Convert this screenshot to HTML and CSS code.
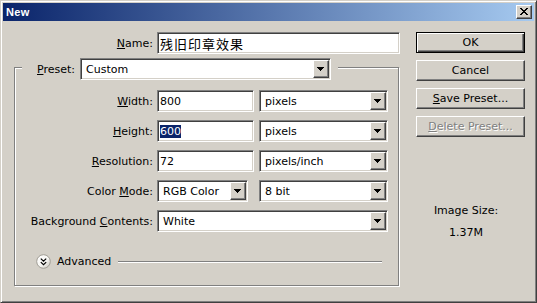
FILE: index.html
```html
<!DOCTYPE html>
<html>
<head>
<meta charset="utf-8">
<title>New</title>
<link rel="stylesheet" href="styles.css">
</head>
<body>
<div class="window">
  <div class="titlebar">
    <span class="title">New</span>
    <span class="close raised">
      <svg width="8" height="7" viewBox="0 0 8 7" shape-rendering="crispEdges"><path d="M0 0h2v1h-2zM6 0h2v1h-2zM1 1h2v1h-2zM5 1h2v1h-2zM2 2h4v1h-4zM3 3h2v1h-2zM2 4h4v1h-4zM1 5h2v1h-2zM5 5h2v1h-2zM0 6h2v1h-2zM6 6h2v1h-2z" fill="#000"/></svg>
    </span>
  </div>
  <div class="body">
    <div class="main">
      <div class="name-row">
        <span class="lbl name-lbl"><u>N</u>ame:</span>
        <div class="edit sunken name-edit"><span class="cjk">残旧印章效果</span></div>
      </div>
      <div class="group">
        <div class="group-head">
          <span class="lbl preset-lbl"><u>P</u>reset:</span>
          <div class="combo sunken preset-combo">
            <span class="combo-text">Custom</span>
            <span class="drop raised"><svg width="7" height="4" viewBox="0 0 7 4" shape-rendering="crispEdges"><path d="M0 0h7v1h-7zM1 1h5v1h-5zM2 2h3v1h-3zM3 3h1v1h-1z" fill="#000"/></svg></span>
          </div>
        </div>
        <div class="grid">
          <span class="lbl row-lbl"><u>W</u>idth:</span>
          <div class="edit sunken field"><span>800</span></div>
          <div class="combo sunken unit"><span class="combo-text">pixels</span><span class="drop raised"><svg width="7" height="4" viewBox="0 0 7 4" shape-rendering="crispEdges"><path d="M0 0h7v1h-7zM1 1h5v1h-5zM2 2h3v1h-3zM3 3h1v1h-1z" fill="#000"/></svg></span></div>

          <span class="lbl row-lbl"><u>H</u>eight:</span>
          <div class="edit sunken field"><span class="sel">600</span></div>
          <div class="combo sunken unit"><span class="combo-text">pixels</span><span class="drop raised"><svg width="7" height="4" viewBox="0 0 7 4" shape-rendering="crispEdges"><path d="M0 0h7v1h-7zM1 1h5v1h-5zM2 2h3v1h-3zM3 3h1v1h-1z" fill="#000"/></svg></span></div>

          <span class="lbl row-lbl"><u>R</u>esolution:</span>
          <div class="edit sunken field"><span>72</span></div>
          <div class="combo sunken unit"><span class="combo-text">pixels/inch</span><span class="drop raised"><svg width="7" height="4" viewBox="0 0 7 4" shape-rendering="crispEdges"><path d="M0 0h7v1h-7zM1 1h5v1h-5zM2 2h3v1h-3zM3 3h1v1h-1z" fill="#000"/></svg></span></div>

          <span class="lbl row-lbl">Color <u>M</u>ode:</span>
          <div class="combo sunken mode"><span class="combo-text">RGB Color</span><span class="drop raised"><svg width="7" height="4" viewBox="0 0 7 4" shape-rendering="crispEdges"><path d="M0 0h7v1h-7zM1 1h5v1h-5zM2 2h3v1h-3zM3 3h1v1h-1z" fill="#000"/></svg></span></div>
          <div class="combo sunken unit"><span class="combo-text">8 bit</span><span class="drop raised"><svg width="7" height="4" viewBox="0 0 7 4" shape-rendering="crispEdges"><path d="M0 0h7v1h-7zM1 1h5v1h-5zM2 2h3v1h-3zM3 3h1v1h-1z" fill="#000"/></svg></span></div>

          <span class="lbl row-lbl">Background <u>C</u>ontents:</span>
          <div class="combo sunken bg"><span class="combo-text">White</span><span class="drop raised"><svg width="7" height="4" viewBox="0 0 7 4" shape-rendering="crispEdges"><path d="M0 0h7v1h-7zM1 1h5v1h-5zM2 2h3v1h-3zM3 3h1v1h-1z" fill="#000"/></svg></span></div>
        </div>
        <div class="advanced">
          <svg class="adv-icon" width="15" height="15" viewBox="0 0 15 15">
            <defs>
              <linearGradient id="g" x1="0" y1="0" x2="1" y2="1">
                <stop offset="0" stop-color="#ffffff"/>
                <stop offset="0.55" stop-color="#f7f6f3"/>
                <stop offset="1" stop-color="#c4c1b8"/>
              </linearGradient>
            </defs>
            <circle cx="7.5" cy="7.5" r="6.8" fill="url(#g)" stroke="#a09d95" stroke-width="1"/>
            <path d="M4.8 4.6 L7.5 7.1 L10.2 4.6 M4.8 8.1 L7.5 10.6 L10.2 8.1" fill="none" stroke="#000" stroke-width="1.2"/>
          </svg>
          <span class="adv-text">Advanced</span>
          <span class="adv-line"></span>
        </div>
      </div>
    </div>
    <div class="side">
      <div class="btn default">OK</div>
      <div class="btn">Cancel</div>
      <div class="btn"><span><u>S</u>ave Preset...</span></div>
      <div class="btn disabled"><span><u>D</u>elete Preset...</span></div>
      <div class="size">
        <div>Image Size:</div>
        <div>1.37M</div>
      </div>
    </div>
  </div>
</div>
</body>
</html>
```
FILE: styles.css
```css
* { box-sizing: border-box; }
html, body { margin: 0; padding: 0; }
body {
  width: 537px;
  height: 303px;
  overflow: hidden;
  background: #d4d0c8;
  font-family: "DejaVu Sans", Tahoma, sans-serif;
  font-size: 11px;
  color: #000;
}
u { text-decoration: underline; text-underline-offset: 1px; }

.window {
  width: 537px;
  height: 303px;
  background: #d4d0c8;
  border: 1px solid;
  border-color: #d4d0c8 #404040 #404040 #d4d0c8;
  box-shadow: inset 1px 1px #fff, inset -1px -1px #808080;
  padding: 2px;
  display: flex;
  flex-direction: column;
}

.titlebar {
  height: 18px;
  background: linear-gradient(to right, #0a246a 0%, #a6caf0 100%);
  display: flex;
  align-items: center;
  justify-content: space-between;
  padding: 0 2px 0 3px;
}
.title {
  color: #fff;
  font-family: "Liberation Sans", Arial, sans-serif;
  font-weight: bold;
  font-size: 11px;
  letter-spacing: 0.3px;
}

.raised {
  background: #d4d0c8;
  border: 1px solid;
  border-color: #fff #404040 #404040 #fff;
  box-shadow: inset -1px -1px #808080;
}
.sunken {
  background: #fff;
  border: 1px solid;
  border-color: #808080 #fff #fff #808080;
  box-shadow: inset 1px 1px #404040, inset -1px -1px #d4d0c8;
}

.close {
  width: 16px;
  height: 14px;
  display: flex;
  align-items: center;
  justify-content: center;
}
.close svg { display: block; margin-left: -1px; margin-top: -1px; }

.body {
  flex: 1;
  display: flex;
  padding-top: 11px;
}
.main {
  width: 413px;
  display: flex;
  flex-direction: column;
}

.lbl { white-space: nowrap; }

.name-row {
  display: flex;
  align-items: center;
  height: 22px;
}
.name-lbl {
  width: 154px;
  text-align: right;
  padding-right: 4px;
}
.edit {
  height: 22px;
  display: flex;
  align-items: center;
  padding-left: 2px;
}
.name-edit { width: 243px; }
.cjk {
  font-family: "Noto Sans CJK SC", sans-serif;
  font-size: 13px;
  letter-spacing: 1px;
}

.group {
  margin: 13px 0 0 11px;
  width: 385px;
  border: 1px solid #808080;
  box-shadow: inset 1px 1px #fff, 1px 1px #fff;
  padding: 0 16px 16px 0;
  display: flex;
  flex-direction: column;
}
.group-head {
  margin: -10px 0 0 7px;
  padding: 0 7px 0 15px;
  background: #d4d0c8;
  display: flex;
  align-items: center;
  align-self: flex-start;
  height: 22px;
}
.preset-lbl { width: 43px; }

.combo {
  height: 22px;
  display: flex;
  align-items: stretch;
  padding: 1px;
}
.combo-text {
  flex: 1;
  display: flex;
  align-items: center;
  padding-left: 4px;
  overflow: hidden;
  white-space: nowrap;
}
.drop {
  width: 16px;
  display: flex;
  align-items: center;
  justify-content: center;
}
.drop svg { display: block; margin-left: -1px; }
.preset-combo { width: 251px; }

.grid {
  margin-top: 10px;
  display: grid;
  grid-template-columns: 142px 102px 129px;
  grid-auto-rows: 22px;
  row-gap: 8px;
  align-items: center;
}
.row-lbl {
  text-align: right;
  padding-right: 4px;
}
.field { width: 97px; }
.unit { width: 129px; }
.mode { width: 91px; }
.bg { grid-column: 2 / 4; width: 231px; }
.sel {
  background: #0a246a;
  color: #fff;
  line-height: 13px;
}

.advanced {
  margin-top: 22px;
  height: 15px;
  display: flex;
  align-items: center;
  padding-left: 21px;
}
.adv-icon { display: block; flex: none; }
.adv-text { margin-left: 6px; }
.adv-line {
  flex: 1;
  margin-left: 7px;
  height: 2px;
  border-top: 1px solid #808080;
  border-bottom: 1px solid #fff;
  margin-top: 1px;
}

.side {
  width: 109px;
  display: flex;
  flex-direction: column;
  gap: 7px;
}
.btn {
  height: 21px;
  display: flex;
  align-items: center;
  justify-content: center;
  background: #d4d0c8;
  border: 1px solid;
  border-color: #fff #404040 #404040 #fff;
  box-shadow: inset -1px -1px #808080;
}
.btn.default {
  border-color: #000;
  box-shadow: inset 1px 1px #fff, inset -1px -1px #404040, inset -2px -2px #808080;
}
.btn.disabled {
  color: #808080;
  text-shadow: 1px 1px #fff;
}
.size {
  margin-top: 60px;
  padding-right: 9px;
  text-align: center;
  line-height: 14px;
  display: flex;
  flex-direction: column;
  gap: 8px;
}
```
